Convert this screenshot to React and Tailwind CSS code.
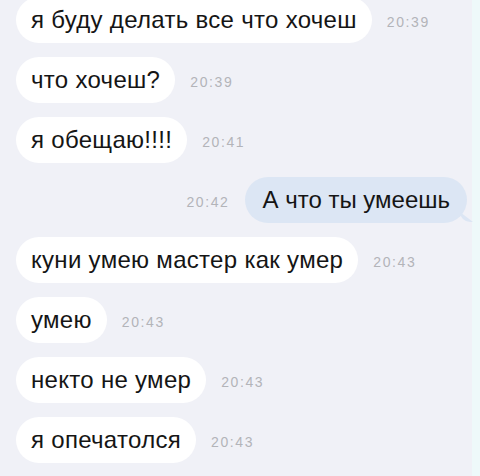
import React from 'react';

const messages = [
  { text: 'я буду делать все что хочеш', time: '20:39' },
  { text: 'что хочеш?', time: '20:39' },
  { text: 'я обещаю!!!!', time: '20:41' },
  { text: 'А что ты умеешь', time: '20:42', out: true },
  { text: 'куни умею мастер как умер', time: '20:43' },
  { text: 'умею', time: '20:43' },
  { text: 'некто не умер', time: '20:43' },
  { text: 'я опечатолся', time: '20:43' },
];

const Message = ({ text, time, out }) => {
  if (out) {
    return (
      <div className="flex items-center justify-end h-[46px] pr-[5px]">
        <span className="text-[14px] tracking-[1.6px] text-[#b3b4b9] mr-[16px] mt-[4px]">{time}</span>
        <div className="relative h-full flex items-center px-[17px] rounded-[23px] bg-[#dce6f4]">
          <span className="text-[24px] text-[#151515] tracking-[0px]">{text}</span>
          {/* tail */}
          <div className="absolute -right-[6px] bottom-[1px] w-[13px] h-[10px] bg-[#dce6f4] rounded-bl-[12px] [clip-path:polygon(0_0,100%_100%,0_100%)]"></div>
        </div>
      </div>
    );
  }
  return (
    <div className="flex items-center h-[46px] pl-[16px]">
      <div className="h-full flex items-center px-[15px] rounded-[23px] bg-white">
        <span className="text-[24px] text-[#151515] tracking-[0.3px]">{text}</span>
      </div>
      <span className="text-[14px] tracking-[1.6px] text-[#b3b4b9] ml-[15px] mt-[4px]">{time}</span>
    </div>
  );
};

export default function App() {
  return (
    <div className="w-[480px] h-[476px] overflow-hidden bg-[#f0f1f7] flex font-['Liberation_Sans',Arial,sans-serif]">
      <div className="flex-1 flex flex-col gap-[14px] -mt-[3px]">
        {messages.map((m, i) => (
          <Message key={i} {...m} />
        ))}
      </div>
      <div className="w-[8px] bg-[#eef9fa]"></div>
    </div>
  );
}
